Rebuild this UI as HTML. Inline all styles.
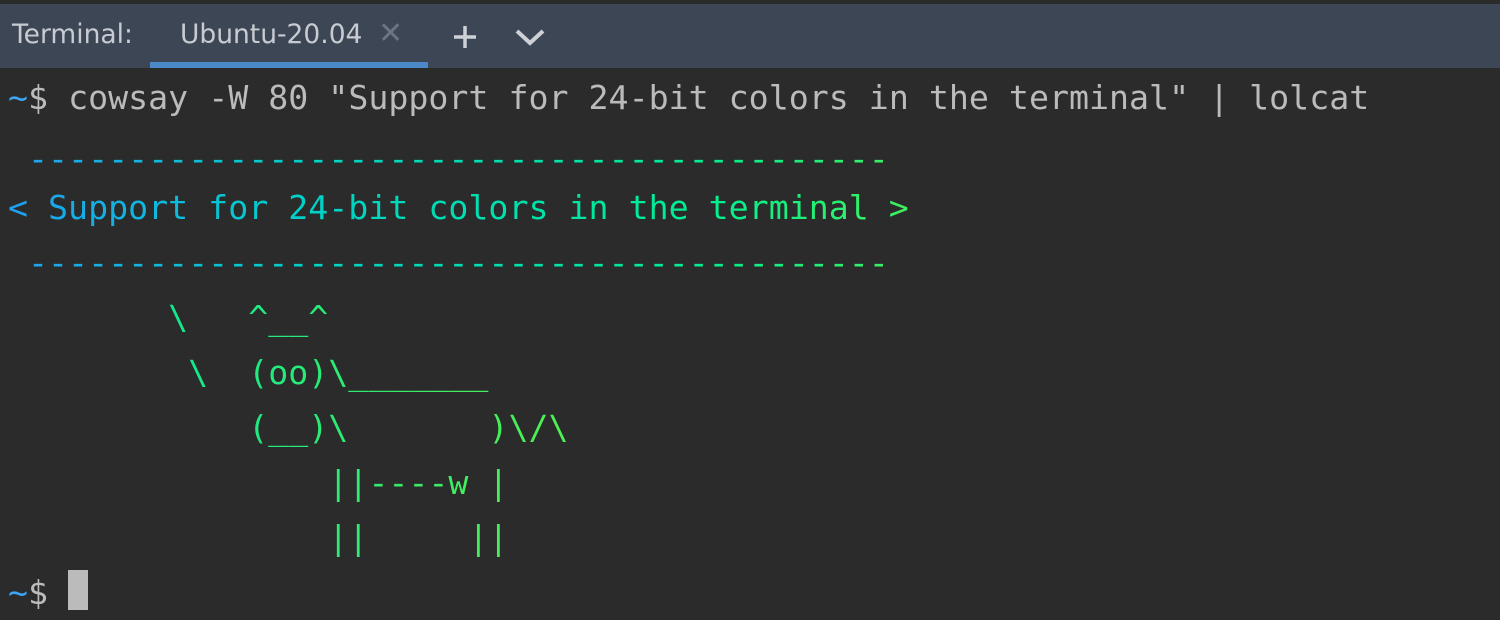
<!DOCTYPE html>
<html><head><style>
html,body{margin:0;padding:0;background:#2b2b2b;width:1500px;height:600px;overflow:hidden}
.top{position:absolute;left:0;top:0;width:1500px;height:4px;background:#2b2b2b}
.bar{position:absolute;left:0;top:4px;width:1500px;height:64px;background:#3c4655;font-family:"DejaVu Sans","Liberation Sans",sans-serif;font-size:26.5px;color:#c8ccd2}
.bar span{position:absolute;top:15px}
.ul{position:absolute;left:150px;top:58px;width:278px;height:6px;background:#4a88c7}
.term{position:absolute;left:8px;top:70px;font-family:"DejaVu Sans Mono","Liberation Mono",monospace;font-size:33.25px;line-height:55px;white-space:pre;letter-spacing:0}
.l{display:block;height:55px}
.g{background:linear-gradient(90deg,#1ea0f0 0px,#00d2c8 300px,#00f090 700px,#40f060 900px);-webkit-background-clip:text;background-clip:text;color:transparent}
.c{background:linear-gradient(90deg,#10e890 150px,#30ec70 350px,#50f050 560px);-webkit-background-clip:text;background-clip:text;color:transparent}
</style></head><body>
<div class="top"></div>
<div class="bar">
<span style="left:12px">Terminal:</span>
<span style="left:180px">Ubuntu-20.04</span>
<span style="left:378px;color:#6b7482;font-size:30px;top:12px">✕</span>
<svg style="position:absolute;left:452px;top:20px" width="26" height="26"><path d="M13 2V24M2 13H24" stroke="#cdd1d6" stroke-width="3.5"/></svg>
<svg style="position:absolute;left:514px;top:22px" width="32" height="22"><path d="M3 5L16 17L29 5" stroke="#cdd1d6" stroke-width="4" fill="none"/></svg>
<div class="ul"></div>
</div>
<div class="term"><span class="l" style="color:#bbbbbb"><span style="color:#3da5f5">~</span>$ cowsay -W 80 "Support for 24-bit colors in the terminal" | lolcat</span><span class="l g" style="position:relative;top:6px"> -------------------------------------------</span><span class="l g">&lt; Support for 24-bit colors in the terminal &gt;</span><span class="l g"> -------------------------------------------</span><span class="l c">        \   ^__^</span><span class="l c">         \  (oo)\_______</span><span class="l c">            (__)\       )\/\</span><span class="l c">                ||----w |</span><span class="l c">                ||     ||</span><span class="l" style="color:#bbbbbb"><span style="color:#3da5f5">~</span>$ <span style="display:inline-block;width:20px;height:40px;background:#bbbbbb;vertical-align:-6px"></span></span></div>
</body></html>
